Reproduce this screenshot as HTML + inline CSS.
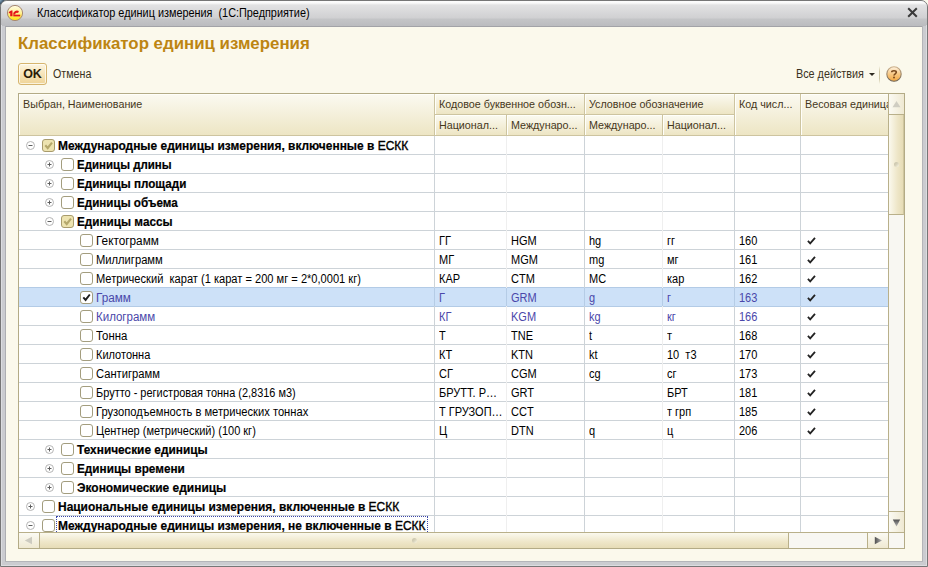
<!DOCTYPE html>
<html><head><meta charset="utf-8">
<style>
*{margin:0;padding:0;box-sizing:border-box}
html,body{width:928px;height:567px;overflow:hidden;background:#fbf9ec;font-family:"Liberation Sans",sans-serif;font-size:11px;color:#000}
.win{position:absolute;left:0;top:0;width:928px;height:567px;background:#cbccd0;border:1px solid #767676;border-radius:7px 7px 0 0;overflow:hidden}
.tb{position:absolute;left:0;top:0;width:926px;height:25px;background:linear-gradient(#fdfdfd 0px,#fafafa 2px,#e2e2e3 4px,#d0d0d2 17px,#c4c5c7 18px,#bbbcbf 25px)}
.tb .t{position:absolute;left:36px;top:5px;font-size:12px;color:#000;white-space:pre;transform:scaleX(.905);transform-origin:0 0}
.logo{position:absolute;left:5px;top:2.5px}
.close{position:absolute;left:906px;top:6px}
.fr{position:absolute;left:0;top:25px;width:926px;height:540px;background:#cbccd0;border-left:1px solid #dcdde0;border-right:1px solid #dcdde0;border-bottom:1px solid #dcdde0}
.content{position:absolute;left:5px;top:26px;width:917px;height:535px;background:#fbf9ec;border-top:1px solid #a2a3a7;border-left:1px solid #adaeb2}
.rfr{position:absolute;left:922px;top:26px;width:1px;height:536px;background:#b4b5b9}
.bfr{position:absolute;left:5px;top:561px;width:918px;height:1px;background:#b4b5b9}
.abs{position:absolute}
.title{position:absolute;left:18px;top:34px;font-size:16.85px;font-weight:bold;color:#bd8512;white-space:pre}
.ok{position:absolute;left:18px;top:63px;width:29px;height:22px;border:1px solid #d6b56e;border-radius:3px;background:linear-gradient(#fdf6e2,#f8e8c0 40%,#efd497);box-shadow:inset 0 0 0 1px rgba(255,255,250,.7);font-weight:bold;font-size:12.5px;color:#2a1d08;text-align:center;line-height:20px}
.cancel{position:absolute;left:52.5px;top:67px;color:#3a3222;white-space:pre;font-size:12px;transform:scaleX(.89);transform-origin:0 0}
.allact{position:absolute;left:796px;top:67px;color:#3a3222;white-space:pre;font-size:12px;transform:scaleX(.9);transform-origin:0 0}
.grid{position:absolute;left:18px;top:93px;width:887px;height:456px;border:1px solid #b3ab86;background:#fff;overflow:hidden}
.ht{display:inline-block;font-size:11.8px;transform:scaleX(.91);transform-origin:0 0}
.hdr{position:absolute;background:linear-gradient(#fbfaf1,#ede5c4);border-right:1px solid #cdc4a0;border-bottom:1px solid #cdc4a0;box-shadow:inset 1px 1px 0 #fffffa;color:#45371b;white-space:pre;overflow:hidden;padding-left:4px}
.row{position:absolute;left:19px;width:869px;height:19px;border-bottom:1px solid #cdd3d8;white-space:pre}
.row.sel{background:#cde1f8;border-bottom-color:#b3cbe6;box-shadow:0 -1px 0 #b3cbe6}
.row.sel .txt,.row.sel .c,.row.blue .txt,.row.blue .c{color:#4a47aa}
.exp{position:absolute;top:5px;width:9px;height:9px}
.exp svg{display:block}
.cbw{position:absolute;top:3px}
.cb{width:13px;height:13px;border:1px solid #a39d7e;border-radius:3px;background:#fff;position:relative}
.cb.g{background:#ede3b0;border-color:#a89b6c}
.cb svg{position:absolute;left:0;top:0}
.txt{position:absolute;top:4px;line-height:13px;font-size:12px;transform:scaleX(.917);transform-origin:0 0}
.txt.b{font-weight:bold;font-size:12.5px;transform:scaleX(.95);-webkit-text-stroke:0.2px #000}
.n{font-weight:normal;-webkit-text-stroke:0.4px #000}
.c{position:absolute;top:4px;line-height:13px;font-size:12px;transform:scaleX(.917);transform-origin:0 0}
.chk{position:absolute;top:6px}
.vl{position:absolute;top:136px;width:1px;height:396px;background:#cdd3d8;z-index:2}
.vl.lt{background:#efefef}
.selv{position:absolute;top:288px;width:1px;height:18px;background:#b5cce6;z-index:3}
.focus{position:absolute;top:0px;width:372px;height:18px;border:1px dotted #3b46a8}
</style></head><body>
<div class="abs" style="left:0;top:0;width:6px;height:6px;background:radial-gradient(circle at 0 0,#8fb0c8 0,#40566a 40%,#c8c6a8 90%)"></div>
<div class="win">
 <div class="tb">
  <div class="logo"><svg width="18" height="18" viewBox="0 0 18 18"><defs><linearGradient id="lg" x1="0" y1="0" x2="0" y2="1"><stop offset="0" stop-color="#fffbe6"/><stop offset=".45" stop-color="#fff3a0"/><stop offset="1" stop-color="#ffe200"/></linearGradient></defs><circle cx="9" cy="9" r="7.6" fill="url(#lg)" stroke="#a78873" stroke-width="1"/><path d="M2.8 8.1L5.1 6.4H6.5V12.3H4.2V8.9L2.8 9.4Z" fill="#e4141a"/><path d="M12.5 8A2.9 2.5 0 0 0 8.2 10.6" fill="none" stroke="#e4141a" stroke-width="2"/><rect x="7.3" y="10.7" width="6.9" height="1.7" fill="#e4141a"/></svg></div>
  <div class="t">Классификатор единиц измерения  (1С:Предприятие)</div>
  <div class="close"><svg width="11" height="11" viewBox="0 0 11 11"><path d="M1.2 1.2l8.6 8.6M9.8 1.2l-8.6 8.6" stroke="#3a3a3a" stroke-width="2"/></svg></div>
 </div>
</div>
<div class="abs" style="left:1px;top:25px;width:1px;height:541px;background:#dcdde0"></div><div class="abs" style="left:926px;top:25px;width:1px;height:541px;background:#dcdde0"></div><div class="abs" style="left:1px;top:565px;width:926px;height:1px;background:#dcdde0"></div><div class="content"></div><div class="rfr"></div><div class="bfr"></div>
<div class="title">Классификатор единиц измерения</div>
<div class="ok">OK</div>
<div class="cancel">Отмена</div>
<div class="allact">Все действия</div>
<svg class="abs" style="left:869px;top:73px" width="6" height="4" viewBox="0 0 6 4"><path d="M0 0h6L3 3z" fill="#2e2a20"/></svg>
<div class="abs" style="left:879px;top:66px;width:1px;height:18px;background:linear-gradient(#fbf9ec,#cfc7a5 30%,#cfc7a5 70%,#fbf9ec)"></div>
<svg class="abs" style="left:886px;top:66px" width="16" height="16" viewBox="0 0 16 16"><defs><linearGradient id="hg" x1="0" y1="0" x2="0" y2="1"><stop offset="0" stop-color="#fff3e0"/><stop offset=".5" stop-color="#f8c985"/><stop offset="1" stop-color="#f2a63e"/></linearGradient><linearGradient id="hs" x1="0" y1="0" x2="0" y2="1"><stop offset="0" stop-color="#cdb08a"/><stop offset="1" stop-color="#6c6050"/></linearGradient></defs><circle cx="8" cy="8" r="7.2" fill="url(#hg)" stroke="url(#hs)" stroke-width="1.1"/><path d="M5.7 6.3C5.7 4.3 10.3 4.3 10.3 6.3C10.3 7.8 8 7.8 8 9.6" fill="none" stroke="#7b4a1c" stroke-width="1.6"/><circle cx="8" cy="11.6" r="1" fill="#7b4a1c"/></svg>
<div class="grid"></div>
<!-- header -->
<div class="hdr" style="left:19px;top:94px;width:416px;height:42px;padding-top:3px"><span class="ht">Выбран, Наименование</span></div>
<div class="hdr" style="left:435px;top:94px;width:150px;height:21px;padding-top:3px"><span class="ht">Кодовое буквенное обозн...</span></div>
<div class="hdr" style="left:585px;top:94px;width:150px;height:21px;padding-top:3px"><span class="ht">Условное обозначение</span></div>
<div class="hdr" style="left:435px;top:115px;width:72px;height:21px;padding-top:3px"><span class="ht">Национал...</span></div>
<div class="hdr" style="left:507px;top:115px;width:78px;height:21px;padding-top:3px"><span class="ht">Междунаро...</span></div>
<div class="hdr" style="left:585px;top:115px;width:78px;height:21px;padding-top:3px"><span class="ht">Междунаро...</span></div>
<div class="hdr" style="left:663px;top:115px;width:72px;height:21px;padding-top:3px"><span class="ht">Национал...</span></div>
<div class="hdr" style="left:735px;top:94px;width:66px;height:42px;padding-top:3px"><span class="ht">Код числ...</span></div>
<div class="hdr" style="left:801px;top:94px;width:87px;height:42px;padding-top:3px;border-right:none"><span class="ht">Весовая единица</span></div>
<div class="vl" style="left:434px"></div><div class="vl lt" style="left:506px"></div><div class="vl" style="left:584px"></div><div class="vl lt" style="left:662px"></div><div class="vl" style="left:734px"></div><div class="vl" style="left:800px"></div>
<div class="row" style="top:136px"><div class="exp" style="left:7px"><svg width="9" height="9" viewBox="0 0 9 9"><circle cx="4.5" cy="4.5" r="4" fill="#fff" stroke="#b4b4b4" stroke-width="1"/><path d="M2.5 4.5h4" stroke="#5f5f5f" stroke-width="1"/></svg></div><div class="cbw" style="left:23px"><div class="cb g"><svg width="11" height="11" viewBox="0 0 11 11"><path d="M2.3 5.3l2.4 2.7 4.3-5.4" fill="none" stroke="#b5a86c" stroke-width="2.1"/></svg></div></div><div class="txt b" style="left:39px;transform:scaleX(0.9555)">Международные единицы измерения, включенные в <span class="n">ЕСКК</span></div></div>
<div class="row" style="top:155px"><div class="exp" style="left:26px"><svg width="9" height="9" viewBox="0 0 9 9"><circle cx="4.5" cy="4.5" r="4" fill="#fff" stroke="#b4b4b4" stroke-width="1"/><path d="M2.5 4.5h4M4.5 2.5v4" stroke="#5f5f5f" stroke-width="1"/></svg></div><div class="cbw" style="left:42px"><div class="cb"></div></div><div class="txt b" style="left:58px;transform:scaleX(0.92)">Единицы длины</div></div>
<div class="row" style="top:174px"><div class="exp" style="left:26px"><svg width="9" height="9" viewBox="0 0 9 9"><circle cx="4.5" cy="4.5" r="4" fill="#fff" stroke="#b4b4b4" stroke-width="1"/><path d="M2.5 4.5h4M4.5 2.5v4" stroke="#5f5f5f" stroke-width="1"/></svg></div><div class="cbw" style="left:42px"><div class="cb"></div></div><div class="txt b" style="left:58px;transform:scaleX(0.9324)">Единицы площади</div></div>
<div class="row" style="top:193px"><div class="exp" style="left:26px"><svg width="9" height="9" viewBox="0 0 9 9"><circle cx="4.5" cy="4.5" r="4" fill="#fff" stroke="#b4b4b4" stroke-width="1"/><path d="M2.5 4.5h4M4.5 2.5v4" stroke="#5f5f5f" stroke-width="1"/></svg></div><div class="cbw" style="left:42px"><div class="cb"></div></div><div class="txt b" style="left:58px;transform:scaleX(0.9312)">Единицы объема</div></div>
<div class="row" style="top:212px"><div class="exp" style="left:26px"><svg width="9" height="9" viewBox="0 0 9 9"><circle cx="4.5" cy="4.5" r="4" fill="#fff" stroke="#b4b4b4" stroke-width="1"/><path d="M2.5 4.5h4" stroke="#5f5f5f" stroke-width="1"/></svg></div><div class="cbw" style="left:42px"><div class="cb g"><svg width="11" height="11" viewBox="0 0 11 11"><path d="M2.3 5.3l2.4 2.7 4.3-5.4" fill="none" stroke="#b5a86c" stroke-width="2.1"/></svg></div></div><div class="txt b" style="left:58px;transform:scaleX(0.9399)">Единицы массы</div></div>
<div class="row" style="top:231px"><div class="cbw" style="left:61px"><div class="cb"></div></div><div class="txt" style="left:77px;transform:scaleX(0.9819)">Гектограмм</div><div class="c" style="left:420px">ГГ</div><div class="c" style="left:492px">HGM</div><div class="c" style="left:570px">hg</div><div class="c" style="left:648px">гг</div><div class="c" style="left:720px">160</div><svg class="chk" style="left:788px" width="9" height="8" viewBox="0 0 9 8"><path d="M0.9 3.9L3.2 6.4L8 0.8" fill="none" stroke="#222" stroke-width="1.8"/></svg></div>
<div class="row" style="top:250px"><div class="cbw" style="left:61px"><div class="cb"></div></div><div class="txt" style="left:77px;transform:scaleX(0.9314)">Миллиграмм</div><div class="c" style="left:420px">МГ</div><div class="c" style="left:492px">MGM</div><div class="c" style="left:570px">mg</div><div class="c" style="left:648px">мг</div><div class="c" style="left:720px">161</div><svg class="chk" style="left:788px" width="9" height="8" viewBox="0 0 9 8"><path d="M0.9 3.9L3.2 6.4L8 0.8" fill="none" stroke="#222" stroke-width="1.8"/></svg></div>
<div class="row" style="top:269px"><div class="cbw" style="left:61px"><div class="cb"></div></div><div class="txt" style="left:77px;transform:scaleX(0.924)">Метрический  карат (1 карат = 200 мг = 2*0,0001 кг)</div><div class="c" style="left:420px">КАР</div><div class="c" style="left:492px">CTM</div><div class="c" style="left:570px">MC</div><div class="c" style="left:648px">кар</div><div class="c" style="left:720px">162</div><svg class="chk" style="left:788px" width="9" height="8" viewBox="0 0 9 8"><path d="M0.9 3.9L3.2 6.4L8 0.8" fill="none" stroke="#222" stroke-width="1.8"/></svg></div>
<div class="row sel" style="top:288px"><div class="cbw" style="left:61px"><div class="cb"><svg width="11" height="11" viewBox="0 0 11 11"><path d="M2.3 5.3l2.3 2.6 4.2-5.4" fill="none" stroke="#1e1e1e" stroke-width="1.9"/></svg></div></div><div class="txt" style="left:77px;transform:scaleX(0.9771)">Грамм</div><div class="c" style="left:420px">Г</div><div class="c" style="left:492px">GRM</div><div class="c" style="left:570px">g</div><div class="c" style="left:648px">г</div><div class="c" style="left:720px">163</div><svg class="chk" style="left:788px" width="9" height="8" viewBox="0 0 9 8"><path d="M0.9 3.9L3.2 6.4L8 0.8" fill="none" stroke="#222" stroke-width="1.8"/></svg></div>
<div class="row blue" style="top:307px"><div class="cbw" style="left:61px"><div class="cb"></div></div><div class="txt" style="left:77px;transform:scaleX(0.9589)">Килограмм</div><div class="c" style="left:420px">КГ</div><div class="c" style="left:492px">KGM</div><div class="c" style="left:570px">kg</div><div class="c" style="left:648px">кг</div><div class="c" style="left:720px">166</div><svg class="chk" style="left:788px" width="9" height="8" viewBox="0 0 9 8"><path d="M0.9 3.9L3.2 6.4L8 0.8" fill="none" stroke="#222" stroke-width="1.8"/></svg></div>
<div class="row" style="top:326px"><div class="cbw" style="left:61px"><div class="cb"></div></div><div class="txt" style="left:77px;transform:scaleX(0.9492)">Тонна</div><div class="c" style="left:420px">Т</div><div class="c" style="left:492px">TNE</div><div class="c" style="left:570px">t</div><div class="c" style="left:648px">т</div><div class="c" style="left:720px">168</div><svg class="chk" style="left:788px" width="9" height="8" viewBox="0 0 9 8"><path d="M0.9 3.9L3.2 6.4L8 0.8" fill="none" stroke="#222" stroke-width="1.8"/></svg></div>
<div class="row" style="top:345px"><div class="cbw" style="left:61px"><div class="cb"></div></div><div class="txt" style="left:77px;transform:scaleX(0.917)">Килотонна</div><div class="c" style="left:420px">КТ</div><div class="c" style="left:492px">KTN</div><div class="c" style="left:570px">kt</div><div class="c" style="left:648px">10  т3</div><div class="c" style="left:720px">170</div><svg class="chk" style="left:788px" width="9" height="8" viewBox="0 0 9 8"><path d="M0.9 3.9L3.2 6.4L8 0.8" fill="none" stroke="#222" stroke-width="1.8"/></svg></div>
<div class="row" style="top:364px"><div class="cbw" style="left:61px"><div class="cb"></div></div><div class="txt" style="left:77px;transform:scaleX(0.9322)">Сантиграмм</div><div class="c" style="left:420px">СГ</div><div class="c" style="left:492px">CGM</div><div class="c" style="left:570px">cg</div><div class="c" style="left:648px">сг</div><div class="c" style="left:720px">173</div><svg class="chk" style="left:788px" width="9" height="8" viewBox="0 0 9 8"><path d="M0.9 3.9L3.2 6.4L8 0.8" fill="none" stroke="#222" stroke-width="1.8"/></svg></div>
<div class="row" style="top:383px"><div class="cbw" style="left:61px"><div class="cb"></div></div><div class="txt" style="left:77px;transform:scaleX(0.9124)">Брутто - регистровая тонна (2,8316 м3)</div><div class="c" style="left:420px">БРУТТ. Р…</div><div class="c" style="left:492px">GRT</div><div class="c" style="left:570px"></div><div class="c" style="left:648px">БРТ</div><div class="c" style="left:720px">181</div><svg class="chk" style="left:788px" width="9" height="8" viewBox="0 0 9 8"><path d="M0.9 3.9L3.2 6.4L8 0.8" fill="none" stroke="#222" stroke-width="1.8"/></svg></div>
<div class="row" style="top:402px"><div class="cbw" style="left:61px"><div class="cb"></div></div><div class="txt" style="left:77px;transform:scaleX(0.9303)">Грузоподъемность в метрических тоннах</div><div class="c" style="left:420px">Т ГРУЗОП…</div><div class="c" style="left:492px">CCT</div><div class="c" style="left:570px"></div><div class="c" style="left:648px">т грп</div><div class="c" style="left:720px">185</div><svg class="chk" style="left:788px" width="9" height="8" viewBox="0 0 9 8"><path d="M0.9 3.9L3.2 6.4L8 0.8" fill="none" stroke="#222" stroke-width="1.8"/></svg></div>
<div class="row" style="top:421px"><div class="cbw" style="left:61px"><div class="cb"></div></div><div class="txt" style="left:77px;transform:scaleX(0.917)">Центнер (метрический) (100 кг)</div><div class="c" style="left:420px">Ц</div><div class="c" style="left:492px">DTN</div><div class="c" style="left:570px">q</div><div class="c" style="left:648px">ц</div><div class="c" style="left:720px">206</div><svg class="chk" style="left:788px" width="9" height="8" viewBox="0 0 9 8"><path d="M0.9 3.9L3.2 6.4L8 0.8" fill="none" stroke="#222" stroke-width="1.8"/></svg></div>
<div class="row" style="top:440px"><div class="exp" style="left:26px"><svg width="9" height="9" viewBox="0 0 9 9"><circle cx="4.5" cy="4.5" r="4" fill="#fff" stroke="#b4b4b4" stroke-width="1"/><path d="M2.5 4.5h4M4.5 2.5v4" stroke="#5f5f5f" stroke-width="1"/></svg></div><div class="cbw" style="left:42px"><div class="cb"></div></div><div class="txt b" style="left:58px;transform:scaleX(0.95)">Технические единицы</div></div>
<div class="row" style="top:459px"><div class="exp" style="left:26px"><svg width="9" height="9" viewBox="0 0 9 9"><circle cx="4.5" cy="4.5" r="4" fill="#fff" stroke="#b4b4b4" stroke-width="1"/><path d="M2.5 4.5h4M4.5 2.5v4" stroke="#5f5f5f" stroke-width="1"/></svg></div><div class="cbw" style="left:42px"><div class="cb"></div></div><div class="txt b" style="left:58px;transform:scaleX(0.941)">Единицы времени</div></div>
<div class="row" style="top:478px"><div class="exp" style="left:26px"><svg width="9" height="9" viewBox="0 0 9 9"><circle cx="4.5" cy="4.5" r="4" fill="#fff" stroke="#b4b4b4" stroke-width="1"/><path d="M2.5 4.5h4M4.5 2.5v4" stroke="#5f5f5f" stroke-width="1"/></svg></div><div class="cbw" style="left:42px"><div class="cb"></div></div><div class="txt b" style="left:58px;transform:scaleX(0.9566)">Экономические единицы</div></div>
<div class="row" style="top:497px"><div class="exp" style="left:7px"><svg width="9" height="9" viewBox="0 0 9 9"><circle cx="4.5" cy="4.5" r="4" fill="#fff" stroke="#b4b4b4" stroke-width="1"/><path d="M2.5 4.5h4M4.5 2.5v4" stroke="#5f5f5f" stroke-width="1"/></svg></div><div class="cbw" style="left:23px"><div class="cb"></div></div><div class="txt b" style="left:39px;transform:scaleX(0.9556)">Национальные единицы измерения, включенные в <span class="n">ЕСКК</span></div></div>
<div class="row" style="top:516px"><div class="exp" style="left:7px"><svg width="9" height="9" viewBox="0 0 9 9"><circle cx="4.5" cy="4.5" r="4" fill="#fff" stroke="#b4b4b4" stroke-width="1"/><path d="M2.5 4.5h4" stroke="#5f5f5f" stroke-width="1"/></svg></div><div class="cbw" style="left:23px"><div class="cb"></div></div><div class="txt b" style="left:39px;transform:scaleX(0.9556)">Международные единицы измерения, не включенные в <span class="n">ЕСКК</span></div><div class="focus" style="left:37px"></div></div>
<div class="selv" style="left:434px"></div><div class="selv" style="left:506px"></div><div class="selv" style="left:584px"></div><div class="selv" style="left:662px"></div><div class="selv" style="left:734px"></div><div class="selv" style="left:800px"></div>

<!-- vertical scrollbar -->
<div class="abs" style="left:888px;top:94px;width:16px;height:438px;background:#f8f7f2;border-left:1px solid #b9b08a"></div>
<div class="abs" style="left:889px;top:94px;width:15px;height:21px;background:linear-gradient(90deg,#fbfaf3,#efe9d2);border-bottom:1px solid #b9b08a"></div>
<svg class="abs" style="left:892px;top:100px" width="9" height="8" viewBox="0 0 9 8"><path d="M4.5 1L8.5 7.2H0.5z" fill="#cfcdc2"/></svg>
<div class="abs" style="left:889px;top:115px;width:15px;height:100px;background:linear-gradient(90deg,#fbf9ee,#eee6c8 60%,#e6dcb6);border-bottom:1px solid #b9b08a;border-right:1px solid #cfc6a0"></div>
<div class="abs" style="left:894px;top:162px;width:5px;height:5px;border-radius:50%;background:linear-gradient(135deg,#c3bea6,#d8d3bb 50%,#fbf8e6)"></div>
<div class="abs" style="left:889px;top:511px;width:15px;height:21px;background:linear-gradient(90deg,#fbfaf3,#efe9d2);border-top:1px solid #b9b08a"></div>
<svg class="abs" style="left:892px;top:519px" width="9" height="8" viewBox="0 0 9 8"><defs><linearGradient id="ag" x1="0" y1="0" x2="0" y2="1"><stop offset="0" stop-color="#505050"/><stop offset="1" stop-color="#b0b0b0"/></linearGradient></defs><path d="M0.8 0.5H8.2L4.5 7.5z" fill="url(#ag)"/></svg>
<!-- horizontal scrollbar -->
<div class="abs" style="left:19px;top:532px;width:869px;height:16px;background:#f8f7f2;border-top:1px solid #b9b08a"></div>
<div class="abs" style="left:19px;top:533px;width:21px;height:15px;background:linear-gradient(#fbfaf3,#efe9d2);border-right:1px solid #b9b08a"></div>
<svg class="abs" style="left:24px;top:536px" width="9" height="9" viewBox="0 0 9 9"><path d="M0.8 4.5L8 0.8V8.2z" fill="#cdcbc0"/></svg>
<div class="abs" style="left:40px;top:533px;width:749px;height:15px;background:linear-gradient(#fbf9ee,#eee6c8 60%,#e6dcb6);border-right:1px solid #b9b08a"></div>
<div class="abs" style="left:412px;top:538px;width:5px;height:5px;border-radius:50%;background:linear-gradient(135deg,#c3bea6,#d8d3bb 50%,#fbf8e6)"></div>
<div class="abs" style="left:867px;top:533px;width:21px;height:15px;background:linear-gradient(#fbfaf3,#efe9d2);border-left:1px solid #b9b08a"></div>
<svg class="abs" style="left:874px;top:536px" width="9" height="9" viewBox="0 0 9 9"><defs><linearGradient id="ag2" x1="0" y1="0" x2="1" y2="0"><stop offset="0" stop-color="#505050"/><stop offset="1" stop-color="#b0b0b0"/></linearGradient></defs><path d="M0.8 0.8L8 4.5L0.8 8.2z" fill="url(#ag2)"/></svg>
<div class="abs" style="left:888px;top:532px;width:16px;height:16px;background:#f8f7f2;border-left:1px solid #b9b08a;border-top:1px solid #b9b08a"></div>
</body></html>
